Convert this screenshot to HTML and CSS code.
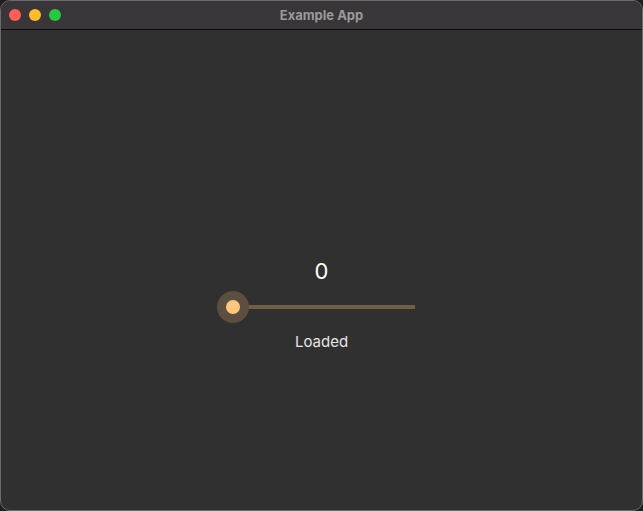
FILE: index.html
```html
<!DOCTYPE html>
<html lang="en">
<head>
<meta charset="UTF-8">
<meta name="viewport" content="width=device-width, initial-scale=1.0">
<title>Example App</title>
<link rel="stylesheet" href="styles.css">
</head>
<body>
  <div class="window">
    <div class="titlebar">
      <div class="lights">
        <span class="light red"></span>
        <span class="light yellow"></span>
        <span class="light green"></span>
      </div>
      <div class="title">Example App</div>
    </div>
    <div class="content">
      <div class="value">0</div>
      <div class="slider">
        <div class="track"></div>
        <div class="halo"></div>
        <div class="thumb"></div>
      </div>
      <div class="status">Loaded</div>
    </div>
  </div>
</body>
</html>
```

FILE: styles.css
```css
html, body {
  margin: 0;
  height: 100%;
  background: #1e1e1e;
}

body {
  font-family: Inter, "Noto Sans", sans-serif;
}

.window {
  box-sizing: border-box;
  width: 643px;
  height: 511px;
  border: 1px solid #6b6b6b;
  border-radius: 10px;
  overflow: hidden;
  background: #303030;
  display: flex;
  flex-direction: column;
}

.titlebar {
  position: relative;
  height: 28px;
  background: #3a3538;
  border-bottom: 1px solid #0c0c0c;
  display: flex;
  align-items: center;
  justify-content: center;
}

.lights {
  position: absolute;
  left: 8px;
  top: 8px;
  display: flex;
  gap: 8px;
}

.light {
  width: 12px;
  height: 12px;
  border-radius: 50%;
}

.red { background: #fe5f57; }
.yellow { background: #febc2e; }
.green { background: #28c840; }

.title {
  color: #9d999c;
  font-size: 13px;
  font-weight: 700;
}

.content {
  flex: 1;
  display: flex;
  flex-direction: column;
  align-items: center;
  padding-top: 228px;
}

.value {
  color: #ffffff;
  font-size: 22px;
  line-height: 26px;
}

.slider {
  position: relative;
  width: 232px;
  height: 32px;
  margin: 7px 0 0 -2px;
}

.track {
  position: absolute;
  left: 28px;
  top: 14px;
  width: 182px;
  height: 4px;
  background: #6f5f47;
}

.halo {
  position: absolute;
  left: 12px;
  top: 0;
  width: 32px;
  height: 32px;
  border-radius: 50%;
  background: #5c4f40;
}

.thumb {
  position: absolute;
  left: 21px;
  top: 9px;
  width: 14px;
  height: 14px;
  border-radius: 50%;
  background: #ffc77d;
}

.status {
  margin-top: 9px;
  color: #e6e6e6;
  font-size: 15px;
  line-height: 20px;
}
```
